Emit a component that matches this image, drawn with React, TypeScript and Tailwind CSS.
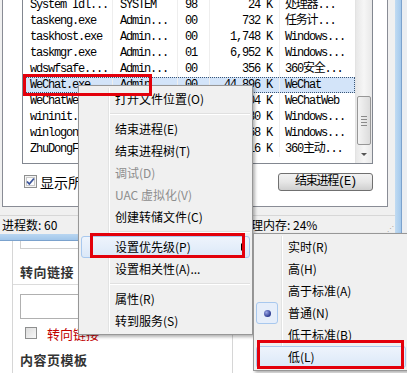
import React from 'react';

const rows = [
  { name: 'System Idl...', user: 'SYSTEM', cpu: '98', mem: '24 K', desc: '处理器...' },
  { name: 'taskeng.exe', user: 'Admin...', cpu: '00', mem: '732 K', desc: '任务计...' },
  { name: 'taskhost.exe', user: 'Admin...', cpu: '00', mem: '1,748 K', desc: 'Windows...' },
  { name: 'taskmgr.exe', user: 'Admin...', cpu: '01', mem: '6,952 K', desc: 'Windows...' },
  { name: 'wdswfsafe....', user: 'Admin...', cpu: '00', mem: '356 K', desc: '360安全...' },
  { name: 'WeChat.exe', user: 'Admin...', cpu: '00', mem: '44,896 K', desc: 'WeChat', sel: true },
  { name: 'WeChatWe...', user: 'Admin...', cpu: '00', mem: '23,104 K', desc: 'WeChatWeb' },
  { name: 'wininit.exe', user: 'SYSTEM', cpu: '00', mem: '880 K', desc: 'Windows...' },
  { name: 'winlogon.exe', user: 'SYSTEM', cpu: '00', mem: '1,268 K', desc: 'Windows...' },
  { name: 'ZhuDongF...', user: 'SYSTEM', cpu: '00', mem: '5,616 K', desc: '360主动...' },
];

const mono = "font-[family-name:Liberation_Mono,Noto_Sans_CJK_SC,monospace] text-[12px] tracking-[-1.2px]";

function MenuItem({ label, disabled, hot, arrow, wide }: { label: string; disabled?: boolean; hot?: boolean; arrow?: boolean; wide?: boolean }) {
  return (
    <div
      className={
        'relative h-[22px] flex items-center rounded-[3px] border ' +
        (wide ? 'pl-[33px] ' : 'pl-[31px] ') +
        (hot ? 'border-[#a8c8ee] bg-gradient-to-b from-[#eef4fc] to-[#dbe8f8]' : 'border-transparent') +
        (disabled ? ' text-[#8d8d8d]' : ' text-black')
      }
    >
      <span>{label}</span>
      {arrow && (
        <span className="ml-auto mr-[4px] w-0 h-0 border-y-[4px] border-y-transparent border-l-[4px] border-l-black" />
      )}
    </div>
  );
}

function Sep() {
  return (
    <div className="h-[8px] flex items-center pl-[29px]">
      <div className="w-full border-t border-[#e0e0e0] border-b border-b-white" />
    </div>
  );
}

export default function App() {
  return (
    <div className="relative w-[407px] h-[373px] overflow-hidden bg-white font-[family-name:Noto_Sans_CJK_SC,sans-serif] text-[12px] leading-none">
      {/* task manager window */}
      <div className="flex h-[234px]">
        <div className="w-[395px] bg-[#f0f0f0] flex flex-col">
          {/* tab page */}
          <div className="ml-[2px] w-[386px] h-[207px] bg-white border-l border-r border-b border-[#898c95] pl-[19px] pr-[14px] flex flex-col">
            <div className="h-[164px] flex border-l border-r border-b border-[#828790]">
              <div className="flex-1 overflow-hidden">
                <div className="-mt-[3px]">
                  {rows.map((r) => (
                    <div
                      key={r.name}
                      className={
                        'flex h-[16px] items-center text-black ' +
                        mono +
                        (r.sel ? ' bg-[#d3e4f9] outline outline-1 outline-dotted outline-[#3a5677] -outline-offset-1' : '')
                      }
                    >
                      <div className="w-[90px] h-full flex items-center pl-[7px] border-r border-[#eeeeee] whitespace-nowrap">{r.name}</div>
                      <div className="w-[65px] h-full flex items-center pl-[7px] border-r border-[#eeeeee] whitespace-nowrap">{r.user}</div>
                      <div className="w-[32px] h-full flex items-center pl-[7px] border-r border-[#eeeeee]">{r.cpu}</div>
                      <div className="w-[70px] h-full flex items-center justify-end pr-[7px] border-r border-[#eeeeee] whitespace-nowrap">{r.mem}</div>
                      <div className="flex-1 h-full flex items-center pl-[5px] whitespace-nowrap">{r.desc}</div>
                    </div>
                  ))}
                </div>
              </div>
              {/* scrollbar */}
              <div className="w-[17px] bg-gradient-to-r from-[#e8e8e8] via-[#f6f6f6] to-[#e8e8e8] border-l border-[#e3e3e3] flex flex-col items-center">
                <div className="mt-[96px] w-[14px] h-[49px] rounded-[2px] border border-[#979797] bg-gradient-to-r from-[#f4f4f4] to-[#dcdcdc] flex flex-col items-center justify-center gap-[2px]">
                  <div className="w-[6px] border-t border-[#8a8a8a]" />
                  <div className="w-[6px] border-t border-[#8a8a8a]" />
                  <div className="w-[6px] border-t border-[#8a8a8a]" />
                  <div className="w-[6px] border-t border-[#8a8a8a]" />
                </div>
                <div className="flex-1" />
                <div className="h-[17px] flex items-center justify-center">
                  <span className="w-0 h-0 border-x-[3px] border-x-transparent border-t-[3px] border-t-[#555]" />
                </div>
              </div>
            </div>
            <div className="mt-[9px] flex items-center h-[17px]">
              <svg width="13" height="13" viewBox="0 0 13 13" className="ml-[2px]">
                <rect x="0.5" y="0.5" width="12" height="12" fill="#f4f4f4" stroke="#8e8f8f" />
                <rect x="2.5" y="2.5" width="8" height="8" fill="#fdfdfd" stroke="#c9c9c9" />
                <path d="M3 6.5 L5.3 9 L10 3.5" fill="none" stroke="#3b549a" strokeWidth="1.8" />
              </svg>
              <span className="ml-[3px] text-[14px] text-black">显示所有用户的进程(S)</span>
              <div className={'ml-auto w-[95px] h-[18px] rounded-[3px] border border-[#707070] bg-gradient-to-b from-[#f2f2f2] via-[#e6e6e6] to-[#cfcfcf] flex items-center justify-center text-black ' + mono}>
                结束进程(E)
              </div>
            </div>
          </div>
          {/* status bar */}
          <div className="mt-[8px] h-[19px] flex items-center border-t border-[#d7d7d7] text-black">
            <div className="w-[120px] pl-[2px]">进程数: 60</div>
            <div className="w-[119px]">CPU 使用率: 3%</div>
            <div className="flex-1">物理内存: 24%</div>
            <div className="w-[8px] h-full flex items-end pb-[2px]">
              <span className="text-[7px] text-[#a0a0a0] leading-none">⋰</span>
            </div>
          </div>
        </div>
        <div className="w-[7px] bg-gradient-to-r from-[#c1dbf2] to-[#a4c9ec] border-r border-[#7ba2cd]" />
        <div className="flex-1 bg-[#eceef1]" />
      </div>
      <div className="h-[7px] w-[402px] bg-gradient-to-b from-[#b9d6f1] to-[#a1c6ea] border-b border-[#7ba2cd]" />

      {/* web page below */}
      <div className="flex h-[132px]">
        <div className="ml-[12px] w-[221px] border-l border-r border-[#d6d6d6] flex flex-col">
          <div className="ml-[7px] h-[8px] border-l border-b border-[#cfcfcf]" />
          <div className="pt-[12px] pb-[3px] pl-[7px] border-b border-[#dcdcdc]">
            <div className="h-[20px] flex items-center text-[13px] font-bold tracking-[0.5px] text-[#333]">转向链接</div>
          </div>
          <div className="mt-[9px] ml-[7px] w-[205px] h-[25px] border border-[#b0b0b0]" />
          <div className="mt-[8px] ml-[12px] flex items-center h-[12px]">
            <div className="w-[12px] h-[12px] border border-[#8e8f8f] bg-gradient-to-br from-[#dcdcdc] to-[#f8f8f8]" />
            <span className="ml-[10px] text-[13px] text-[#c00000]">转向链接</span>
          </div>
          <div className="mt-[10px] pl-[7px] h-[20px] flex items-center text-[13px] font-bold tracking-[0.5px] text-[#333]">内容页模板</div>
        </div>
      </div>

      {/* context menu */}
      <div className="absolute left-[78px] top-[85px] w-[175px] bg-[#f0f0f0] border border-[#979797] p-[2px] shadow-[2px_2px_3px_rgba(0,0,0,0.3)]">
        <div className="absolute top-[2px] bottom-[2px] left-[29px] w-[2px] border-l border-[#e2e3e3] bg-white" />
        <MenuItem wide label="打开文件位置(O)" />
        <Sep />
        <MenuItem wide label="结束进程(E)" />
        <MenuItem wide label="结束进程树(T)" />
        <MenuItem wide label="调试(D)" disabled />
        <MenuItem wide label="UAC 虚拟化(V)" disabled />
        <MenuItem wide label="创建转储文件(C)" />
        <Sep />
        <MenuItem wide label="设置优先级(P)" hot arrow />
        <MenuItem wide label="设置相关性(A)..." />
        <Sep />
        <MenuItem wide label="属性(R)" />
        <MenuItem wide label="转到服务(S)" />
      </div>

      {/* priority submenu */}
      <div className="absolute left-[253px] top-[233px] w-[156px] bg-[#f0f0f0] border border-[#979797] p-[2px] shadow-[2px_2px_3px_rgba(0,0,0,0.3)]">
        <div className="absolute top-[2px] bottom-[2px] left-[27px] w-[2px] border-l border-[#e2e3e3] bg-white" />
        <MenuItem label="实时(R)" />
        <MenuItem label="高(H)" />
        <MenuItem label="高于标准(A)" />
        <div className="relative">
          <div className="absolute left-0 top-0 w-[22px] h-[22px] rounded-[3px] border border-[#a8c8ee] bg-[#e6eefa] flex items-center justify-center">
            <span className="w-[7px] h-[7px] rounded-full bg-[radial-gradient(circle_at_35%_35%,#9aa6e6,#2b3990_70%)]" />
          </div>
          <MenuItem label="普通(N)" />
        </div>
        <MenuItem label="低于标准(B)" />
        <MenuItem label="低(L)" hot />
      </div>

      {/* red annotation boxes */}
      <div className="absolute left-[23px] top-[74px] w-[129px] h-[22px] border-[3px] border-[#e3000b]" />
      <div className="absolute left-[90px] top-[233px] w-[155px] h-[25px] border-[3px] border-[#e3000b]" />
      <div className="absolute left-[257px] top-[340px] w-[147px] h-[29px] border-[3px] border-[#e3000b]" />
    </div>
  );
}
